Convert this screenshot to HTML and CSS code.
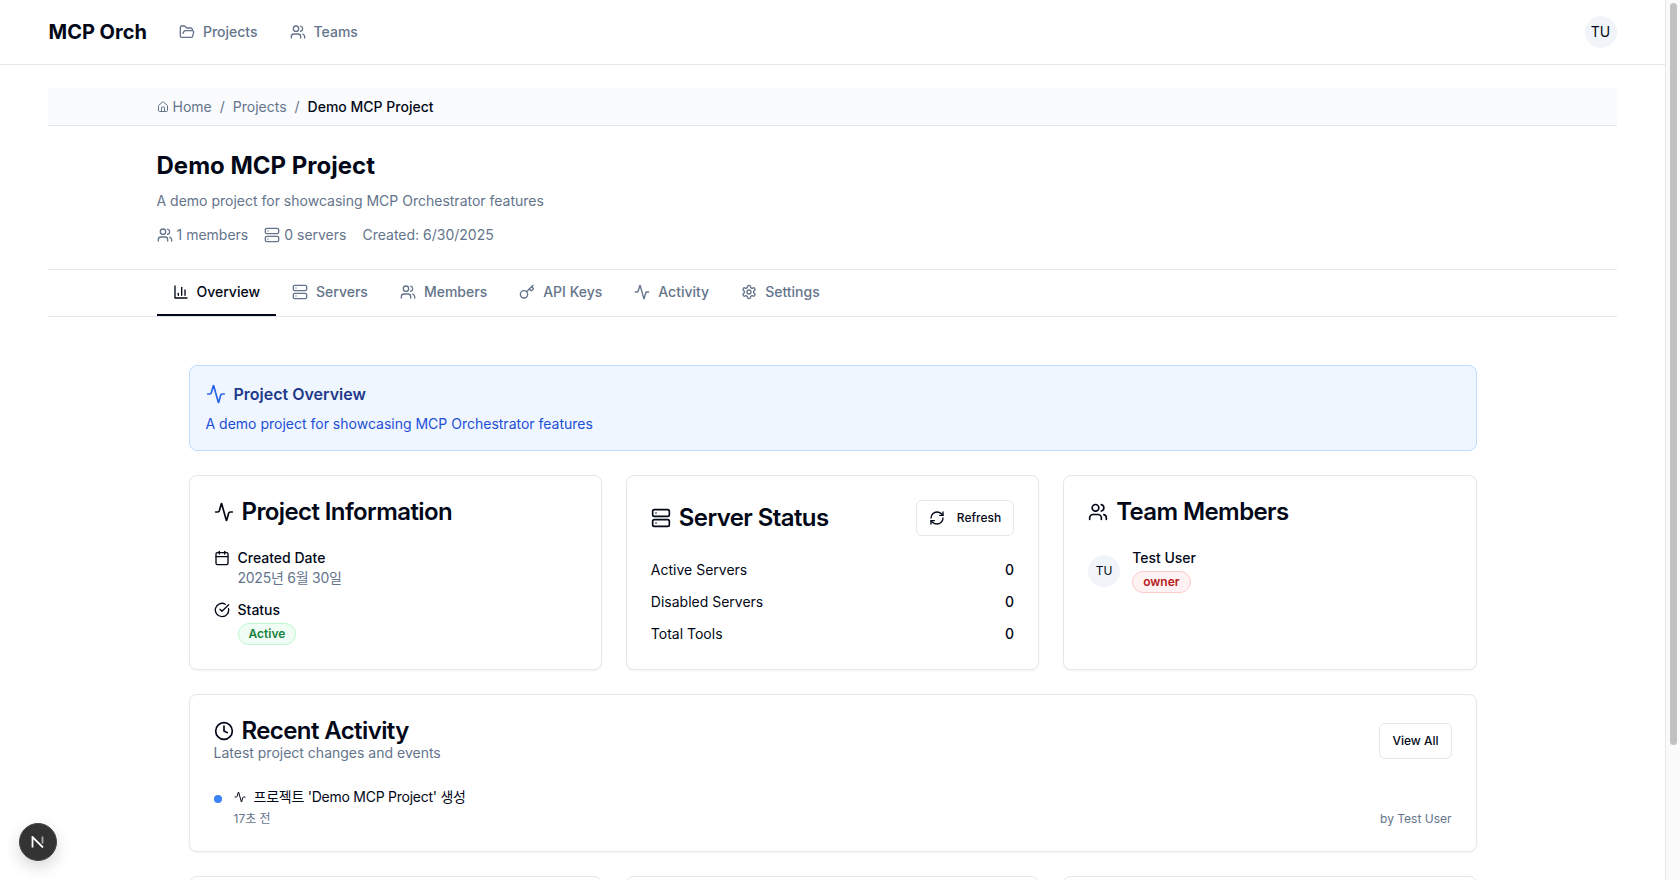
FILE: index.html
```html
<!DOCTYPE html>
<html lang="en">
<head>
  <meta charset="UTF-8">
  <title>Demo MCP Project - MCP Orch</title>
  <link rel="stylesheet" href="styles.css">
</head>
<body>
  <!-- icons used across the page -->
  <svg class="sprite" aria-hidden="true">
    <symbol id="i-folder" viewBox="0 0 24 24"><path d="m6 14 1.5-2.9A2 2 0 0 1 9.24 10H20a2 2 0 0 1 1.94 2.5l-1.54 6a2 2 0 0 1-1.95 1.5H4a2 2 0 0 1-2-2V5a2 2 0 0 1 2-2h3.9a2 2 0 0 1 1.69.9l.81 1.2a2 2 0 0 0 1.67.9H18a2 2 0 0 1 2 2v2"/></symbol>
    <symbol id="i-users" viewBox="0 0 24 24"><path d="M16 21v-2a4 4 0 0 0-4-4H6a4 4 0 0 0-4 4v2"/><circle cx="9" cy="7" r="4"/><path d="M22 21v-2a4 4 0 0 0-3-3.87"/><path d="M16 3.13a4 4 0 0 1 0 7.75"/></symbol>
    <symbol id="i-home" viewBox="0 0 24 24"><path d="M15 21v-8a1 1 0 0 0-1-1h-4a1 1 0 0 0-1 1v8"/><path d="M3 10a2 2 0 0 1 .709-1.528l7-5.999a2 2 0 0 1 2.582 0l7 5.999A2 2 0 0 1 21 10v9a2 2 0 0 1-2 2H5a2 2 0 0 1-2-2z"/></symbol>
    <symbol id="i-server" viewBox="0 0 24 24"><rect x="2" y="2" width="20" height="8" rx="2"/><rect x="2" y="14" width="20" height="8" rx="2"/><path d="M6 6h.01"/><path d="M6 18h.01"/></symbol>
    <symbol id="i-chart" viewBox="0 0 24 24"><path d="M3 3v18h18"/><path d="M18 17V9"/><path d="M13 17V5"/><path d="M8 17v-3"/></symbol>
    <symbol id="i-key" viewBox="0 0 24 24"><path d="m15.5 7.5 2.3 2.3a1 1 0 0 0 1.4 0l2.1-2.1a1 1 0 0 0 0-1.4L19 4"/><path d="m21 2-9.6 9.6"/><circle cx="7.5" cy="15.5" r="5.5"/></symbol>
    <symbol id="i-activity" viewBox="0 0 24 24"><path d="M22 12h-2.48a2 2 0 0 0-1.93 1.46l-2.35 8.36a.25.25 0 0 1-.48 0L9.24 2.18a.25.25 0 0 0-.48 0l-2.35 8.36A2 2 0 0 1 4.49 12H2"/></symbol>
    <symbol id="i-settings" viewBox="0 0 24 24"><path d="M12.22 2h-.44a2 2 0 0 0-2 2v.18a2 2 0 0 1-1 1.73l-.43.25a2 2 0 0 1-2 0l-.15-.08a2 2 0 0 0-2.73.73l-.22.38a2 2 0 0 0 .73 2.73l.15.1a2 2 0 0 1 1 1.72v.51a2 2 0 0 1-1 1.74l-.15.09a2 2 0 0 0-.73 2.73l.22.38a2 2 0 0 0 2.73.73l.15-.08a2 2 0 0 1 2 0l.43.25a2 2 0 0 1 1 1.73V20a2 2 0 0 0 2 2h.44a2 2 0 0 0 2-2v-.18a2 2 0 0 1 1-1.73l.43-.25a2 2 0 0 1 2 0l.15.08a2 2 0 0 0 2.73-.73l.22-.39a2 2 0 0 0-.73-2.73l-.15-.08a2 2 0 0 1-1-1.74v-.5a2 2 0 0 1 1-1.74l.15-.09a2 2 0 0 0 .73-2.73l-.22-.38a2 2 0 0 0-2.73-.73l-.15.08a2 2 0 0 1-2 0l-.43-.25a2 2 0 0 1-1-1.73V4a2 2 0 0 0-2-2z"/><circle cx="12" cy="12" r="3"/></symbol>
    <symbol id="i-calendar" viewBox="0 0 24 24"><path d="M8 2v4"/><path d="M16 2v4"/><rect x="3" y="4" width="18" height="18" rx="2"/><path d="M3 10h18"/></symbol>
    <symbol id="i-check" viewBox="0 0 24 24"><path d="M21.801 10A10 10 0 1 1 17 3.335"/><path d="m9 11 3 3L22 4"/></symbol>
    <symbol id="i-refresh" viewBox="0 0 24 24"><path d="M3 12a9 9 0 0 1 9-9 9.75 9.75 0 0 1 6.74 2.74L21 8"/><path d="M21 3v5h-5"/><path d="M21 12a9 9 0 0 1-9 9 9.75 9.75 0 0 1-6.74-2.74L3 16"/><path d="M8 16H3v5"/></symbol>
    <symbol id="i-clock" viewBox="0 0 24 24"><circle cx="12" cy="12" r="10"/><path d="M12 6v6l4 2"/></symbol>
  </svg>

  <div class="page">
    <header class="topbar">
      <div class="topbar-left">
        <a class="logo">MCP Orch</a>
        <nav class="topnav">
          <a class="topnav-link"><svg class="icon"><use href="#i-folder"/></svg>Projects</a>
          <a class="topnav-link"><svg class="icon"><use href="#i-users"/></svg>Teams</a>
        </nav>
      </div>
      <div class="avatar">TU</div>
    </header>

    <div class="wrap">
      <div class="breadcrumb">
        <div class="inner breadcrumb-row">
          <a class="crumb"><svg class="icon icon-xs"><use href="#i-home"/></svg>Home</a>
          <span class="crumb-sep">/</span>
          <a class="crumb">Projects</a>
          <span class="crumb-sep">/</span>
          <span class="crumb-current">Demo MCP Project</span>
        </div>
      </div>

      <div class="inner project-head">
        <h1>Demo MCP Project</h1>
        <p class="muted project-desc">A demo project for showcasing MCP Orchestrator features</p>
        <div class="project-meta">
          <span class="meta-item"><svg class="icon"><use href="#i-users"/></svg>1 members</span>
          <span class="meta-item"><svg class="icon"><use href="#i-server"/></svg>0 servers</span>
          <span class="meta-item">Created: 6/30/2025</span>
        </div>
      </div>

      <div class="tabs">
        <div class="inner tabs-row">
          <a class="tab tab-active"><svg class="icon"><use href="#i-chart"/></svg>Overview</a>
          <a class="tab"><svg class="icon"><use href="#i-server"/></svg>Servers</a>
          <a class="tab"><svg class="icon"><use href="#i-users"/></svg>Members</a>
          <a class="tab"><svg class="icon"><use href="#i-key"/></svg>API Keys</a>
          <a class="tab"><svg class="icon"><use href="#i-activity"/></svg>Activity</a>
          <a class="tab"><svg class="icon"><use href="#i-settings"/></svg>Settings</a>
        </div>
      </div>
    </div>

    <main class="content">
      <section class="notice">
        <h2 class="notice-title"><svg class="icon icon-lg"><use href="#i-activity"/></svg>Project Overview</h2>
        <p class="notice-text">A demo project for showcasing MCP Orchestrator features</p>
      </section>

      <div class="card-grid">
        <section class="card">
          <h3 class="card-title"><svg class="icon icon-lg"><use href="#i-activity"/></svg>Project Information</h3>
          <div class="info-list">
            <div class="info-item">
              <svg class="icon"><use href="#i-calendar"/></svg>
              <div>
                <div class="info-label">Created Date</div>
                <div class="muted ko-text">2025년 6월 30일</div>
              </div>
            </div>
            <div class="info-item">
              <svg class="icon"><use href="#i-check"/></svg>
              <div>
                <div class="info-label">Status</div>
                <span class="badge badge-green">Active</span>
              </div>
            </div>
          </div>
        </section>

        <section class="card">
          <div class="card-head-row">
            <h3 class="card-title"><svg class="icon icon-lg"><use href="#i-server"/></svg>Server Status</h3>
            <button class="btn"><svg class="icon"><use href="#i-refresh"/></svg>Refresh</button>
          </div>
          <div class="stat-list">
            <div class="stat-row"><span>Active Servers</span><span class="stat-value">0</span></div>
            <div class="stat-row"><span>Disabled Servers</span><span class="stat-value">0</span></div>
            <div class="stat-row"><span>Total Tools</span><span class="stat-value">0</span></div>
          </div>
        </section>

        <section class="card">
          <h3 class="card-title"><svg class="icon icon-lg"><use href="#i-users"/></svg>Team Members</h3>
          <div class="member">
            <div class="avatar avatar-sm">TU</div>
            <div>
              <div class="info-label">Test User</div>
              <span class="badge badge-red">owner</span>
            </div>
          </div>
        </section>
      </div>

      <section class="card activity-card">
        <div class="card-head-row activity-head">
          <div>
            <h3 class="card-title"><svg class="icon icon-lg"><use href="#i-clock"/></svg>Recent Activity</h3>
            <p class="muted">Latest project changes and events</p>
          </div>
          <button class="btn">View All</button>
        </div>
        <div class="activity-row">
          <span class="dot"></span>
          <div class="activity-body">
            <div class="activity-text ko-text"><svg class="icon icon-xs"><use href="#i-activity"/></svg>프로젝트 'Demo MCP Project' 생성</div>
            <div class="activity-foot"><span>17초 전</span><span>by Test User</span></div>
          </div>
        </div>
      </section>

      <div class="card-grid">
        <section class="card card-empty"></section>
        <section class="card card-empty"></section>
        <section class="card card-empty"></section>
      </div>
    </main>
  </div>

  <div class="scrollbar"><div class="scrollbar-thumb"></div></div>

  <button class="dev-badge" aria-label="Next.js dev tools">
    <svg viewBox="0 0 14 12" width="14" height="12" fill="none" stroke-width="1.8"><path d="M1.5 11.5V1L12 11.5" stroke="#fff"/><path d="M11.5 .5v7" stroke="#aaa"/></svg>
  </button>
</body>
</html>
```

FILE: styles.css
```css
* {
  box-sizing: border-box;
}

html, body {
  height: 880px;
  margin: 0;
  overflow: hidden;
}

body {
  display: flex;
  font-family: Inter, "Noto Sans CJK KR", sans-serif;
  font-size: 14px;
  line-height: 20px;
  color: #020817;
  background-color: #fff;
}

h1, h2, h3, p {
  margin: 0;
}

.sprite {
  display: none;
}

.icon {
  flex: none;
  width: 16px;
  height: 16px;
  fill: none;
  stroke: currentColor;
  stroke-width: 2;
  stroke-linecap: round;
  stroke-linejoin: round;
}

.icon-xs {
  width: 12px;
  height: 12px;
}

.icon-lg {
  width: 20px;
  height: 20px;
}

.muted {
  color: #64748b;
}

.page {
  flex: 1;
  min-width: 0;
  height: 880px;
  overflow: hidden;
}

.scrollbar {
  flex: none;
  width: 15px;
  padding: 3px 3px 0 4px;
  background-color: #fafafa;
  border-left: 1px solid #e8e8e8;
}

.scrollbar-thumb {
  height: 742px;
  background-color: #c1c1c1;
  border-radius: 4px;
}

/* top bar */
.topbar {
  display: flex;
  align-items: center;
  justify-content: space-between;
  height: 65px;
  padding: 0 48.5px;
  border-bottom: 1px solid #e5e7eb;
}

.topbar-left {
  display: flex;
  align-items: center;
  gap: 32px;
}

.logo {
  font-size: 20px;
  line-height: 28px;
  font-weight: 700;
}

.topnav {
  display: flex;
  gap: 32px;
}

.topnav-link {
  display: flex;
  align-items: center;
  gap: 8px;
  font-weight: 500;
  color: #64748b;
}

.avatar {
  display: flex;
  align-items: center;
  justify-content: center;
  flex: none;
  width: 32px;
  height: 32px;
  border-radius: 50%;
  background-color: #f1f5f9;
}

.avatar-sm {
  font-size: 12px;
}

/* breadcrumb, project head, tabs */
.wrap {
  padding: 23px 48px 0;
}

.inner {
  max-width: 1352px;
  margin: 0 auto;
}

.breadcrumb {
  height: 38px;
  background-color: #fafbfd;
  border-bottom: 1px solid #e5e7eb;
}

.breadcrumb-row {
  display: flex;
  align-items: center;
  gap: 8px;
  height: 37px;
  color: #64748b;
}

.crumb {
  display: flex;
  align-items: center;
  gap: 4px;
}

.crumb-current {
  font-weight: 500;
  color: #020817;
}

.project-head {
  padding: 24px 0 24px;
}

h1 {
  font-size: 24px;
  line-height: 32px;
  font-weight: 700;
}

.project-desc {
  margin-top: 9px;
}

.project-meta {
  display: flex;
  gap: 16px;
  margin-top: 14px;
  color: #64748b;
}

.meta-item {
  display: flex;
  align-items: center;
  gap: 4px;
}

.tabs {
  border-top: 1px solid #e5e7eb;
  border-bottom: 1px solid #e5e7eb;
}

.tabs-row {
  display: flex;
}

.tab {
  display: flex;
  align-items: center;
  gap: 8px;
  height: 46px;
  padding: 0 16px 1px;
  font-weight: 500;
  color: #64748b;
  border-bottom: 2px solid transparent;
}

.tab-active {
  color: #020817;
  border-bottom-color: #020817;
}

/* main content */
.content {
  display: flex;
  flex-direction: column;
  gap: 24px;
  width: 1288px;
  margin: 48px auto 0;
}

.notice {
  padding: 16px;
  background-color: #eff6ff;
  border: 1px solid #bfdbfe;
  border-radius: 8px;
}

.notice-title {
  display: flex;
  align-items: center;
  gap: 8px;
  font-size: 16px;
  line-height: 24px;
  font-weight: 600;
  color: #1e3a8a;
}

.notice-title .icon {
  color: #2563eb;
}

.notice-text {
  margin-top: 8px;
  color: #1d4ed8;
}

.card-grid {
  display: grid;
  grid-template-columns: repeat(3, 1fr);
  gap: 24px;
}

.card {
  padding: 24px;
  background-color: #fff;
  border: 1px solid #e5e7eb;
  border-radius: 8px;
  box-shadow: 0 1px 2px rgba(0, 0, 0, 0.05);
}

.card-empty {
  min-height: 120px;
}

.card-title {
  display: flex;
  align-items: center;
  gap: 8px;
  font-size: 24px;
  line-height: 24px;
  font-weight: 600;
  letter-spacing: -0.6px;
}

.card-head-row {
  display: flex;
  align-items: center;
  justify-content: space-between;
}

.info-list {
  display: flex;
  flex-direction: column;
  gap: 12px;
  margin-top: 24px;
}

.info-item {
  display: flex;
  gap: 8px;
}

.info-item .icon {
  margin-top: 2px;
}

.info-label {
  font-weight: 500;
}

/* korean glyphs run wider here than in the original font */
.ko-text {
  letter-spacing: -0.25px;
}

.badge {
  display: flex;
  width: fit-content;
  margin-top: 3px;
  padding: 0 10px;
  font-size: 12px;
  font-weight: 600;
  border: 1px solid transparent;
  border-radius: 999px;
}

.badge-green {
  color: #15803d;
  background-color: #f0fdf4;
  border-color: #bbf7d0;
}

.badge-red {
  color: #b91c1c;
  background-color: #fef2f2;
  border-color: #fecaca;
}

.btn {
  display: flex;
  align-items: center;
  gap: 12px;
  height: 36px;
  padding: 0 12px 1px;
  font-family: inherit;
  font-size: 12px;
  font-weight: 500;
  color: #020817;
  background-color: #fff;
  border: 1px solid #e5e7eb;
  border-radius: 6px;
}

.stat-list {
  display: flex;
  flex-direction: column;
  gap: 12px;
  margin-top: 24px;
}

.stat-row {
  display: flex;
  justify-content: space-between;
}

.stat-value {
  font-weight: 500;
}

.member {
  display: flex;
  align-items: center;
  gap: 12px;
  margin-top: 24px;
}

.activity-head {
  margin-bottom: 24px;
}

.activity-row {
  display: flex;
  gap: 12px;
}

.dot {
  flex: none;
  width: 8px;
  height: 8px;
  margin-top: 8px;
  background-color: #3b82f6;
  border-radius: 50%;
}

.activity-body {
  flex: 1;
}

.activity-text {
  display: flex;
  align-items: center;
  gap: 8px;
}

.activity-foot {
  display: flex;
  justify-content: space-between;
  margin-top: 4px;
  font-size: 12px;
  line-height: 16px;
  color: #64748b;
}

/* next.js dev indicator */
.dev-badge {
  position: absolute;
  left: 19px;
  top: 823px;
  display: flex;
  align-items: center;
  justify-content: center;
  width: 38px;
  height: 38px;
  padding: 0;
  background-color: #333;
  border: 1px solid #444;
  border-radius: 50%;
  box-shadow: 0 6px 16px rgba(0, 0, 0, 0.16);
}
```
